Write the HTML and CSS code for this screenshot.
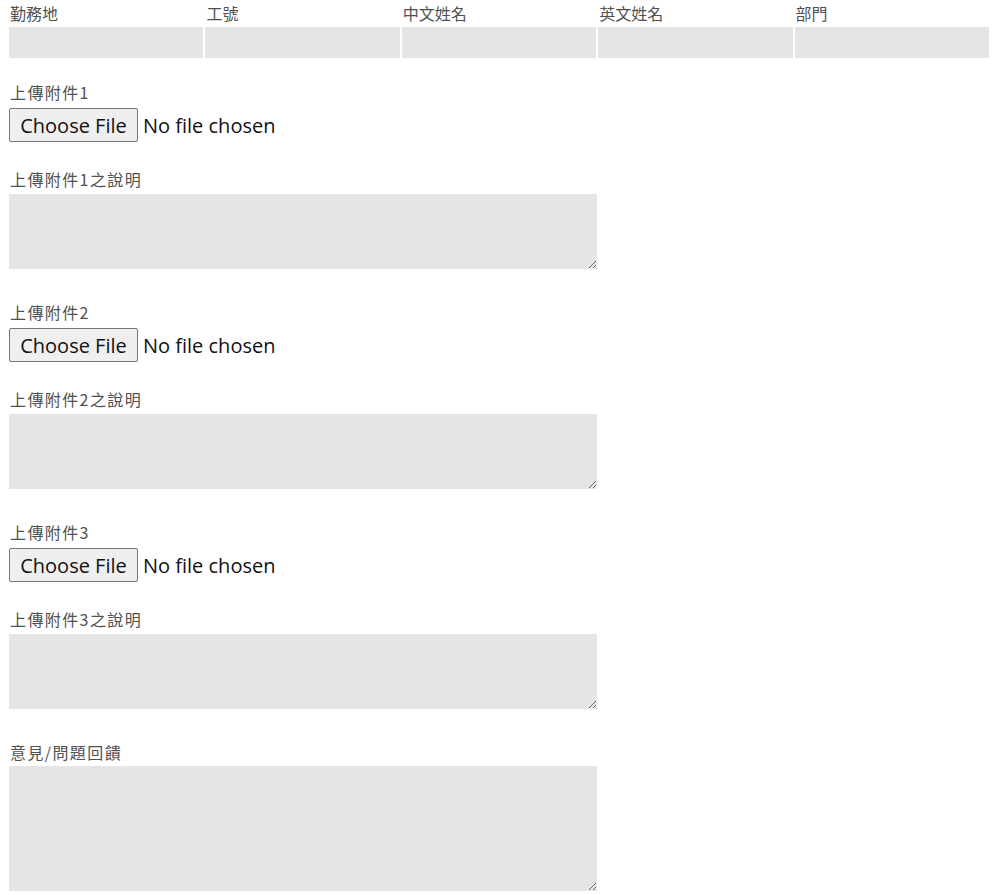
FILE: index.html
```html
<!DOCTYPE html>
<html lang="zh-Hant">
<head>
<meta charset="utf-8">
<title>Form</title>
<link rel="stylesheet" href="styles.css">
</head>
<body>
<div class="page">
  <div class="info-grid">
    <div class="label">勤務地</div>
    <div class="label">工號</div>
    <div class="label">中文姓名</div>
    <div class="label">英文姓名</div>
    <div class="label">部門</div>
    <div class="cell"></div>
    <div class="cell"></div>
    <div class="cell"></div>
    <div class="cell"></div>
    <div class="cell"></div>
  </div>

  <div class="section">
    <div class="label wide">上傳附件1</div>
    <div class="file-row"><button class="file-btn" type="button">Choose File</button><span class="file-text">No file chosen</span></div>
    <div class="label wide desc-label">上傳附件1之說明</div>
    <textarea class="area"></textarea>
  </div>

  <div class="section">
    <div class="label wide">上傳附件2</div>
    <div class="file-row"><button class="file-btn" type="button">Choose File</button><span class="file-text">No file chosen</span></div>
    <div class="label wide desc-label">上傳附件2之說明</div>
    <textarea class="area"></textarea>
  </div>

  <div class="section">
    <div class="label wide">上傳附件3</div>
    <div class="file-row"><button class="file-btn" type="button">Choose File</button><span class="file-text">No file chosen</span></div>
    <div class="label wide desc-label">上傳附件3之說明</div>
    <textarea class="area"></textarea>
  </div>

  <div class="section">
    <div class="label wide">意見/問題回饋</div>
    <textarea class="area area-tall"></textarea>
  </div>
</div>
</body>
</html>
```
FILE: styles.css
```css
html, body {
  margin: 0;
  padding: 0;
  background: #ffffff;
}
.page {
  padding: 3px 11px 0 9px;
  font-family: "Noto Sans CJK TC", "Noto Sans", sans-serif;
}
.label {
  font-size: 16px;
  line-height: 20px;
  height: 20px;
  color: #505050;
  padding-left: 1px;
}
.wide {
  letter-spacing: 1.4px;
}
.info-grid {
  display: grid;
  grid-template-columns: repeat(5, 1fr);
  column-gap: 2px;
  row-gap: 4px;
  width: 980px;
}
.cell {
  height: 31px;
  background: #e6e5e6;
}
.section {
  display: flex;
  flex-direction: column;
  align-items: flex-start;
  margin-top: 24px;
}
.section + .section {
  margin-top: 33px;
}
.file-row {
  display: flex;
  align-items: center;
  margin-top: 6px;
  height: 34px;
}
.file-btn {
  box-sizing: border-box;
  height: 34px;
  width: 129px;
  padding: 0;
  margin: 0 5px 0 0;
  background: #efefef;
  border: 1px solid #767676;
  border-radius: 2px;
  font-family: "Open Sans", "Noto Sans", sans-serif;
  font-size: 20px;
  color: #111;
}
.file-text {
  font-family: "Open Sans", "Noto Sans", sans-serif;
  font-size: 20px;
  color: #111;
}
.desc-label {
  margin-top: 27px;
}
.area {
  display: block;
  box-sizing: border-box;
  width: 588px;
  height: 75px;
  margin-top: 5px;
  border: none;
  background: #e6e5e6;
  padding: 4px;
  font-family: "Noto Sans CJK TC", sans-serif;
}
.area-tall {
  height: 125px;
  margin-top: 4px;
}
```
